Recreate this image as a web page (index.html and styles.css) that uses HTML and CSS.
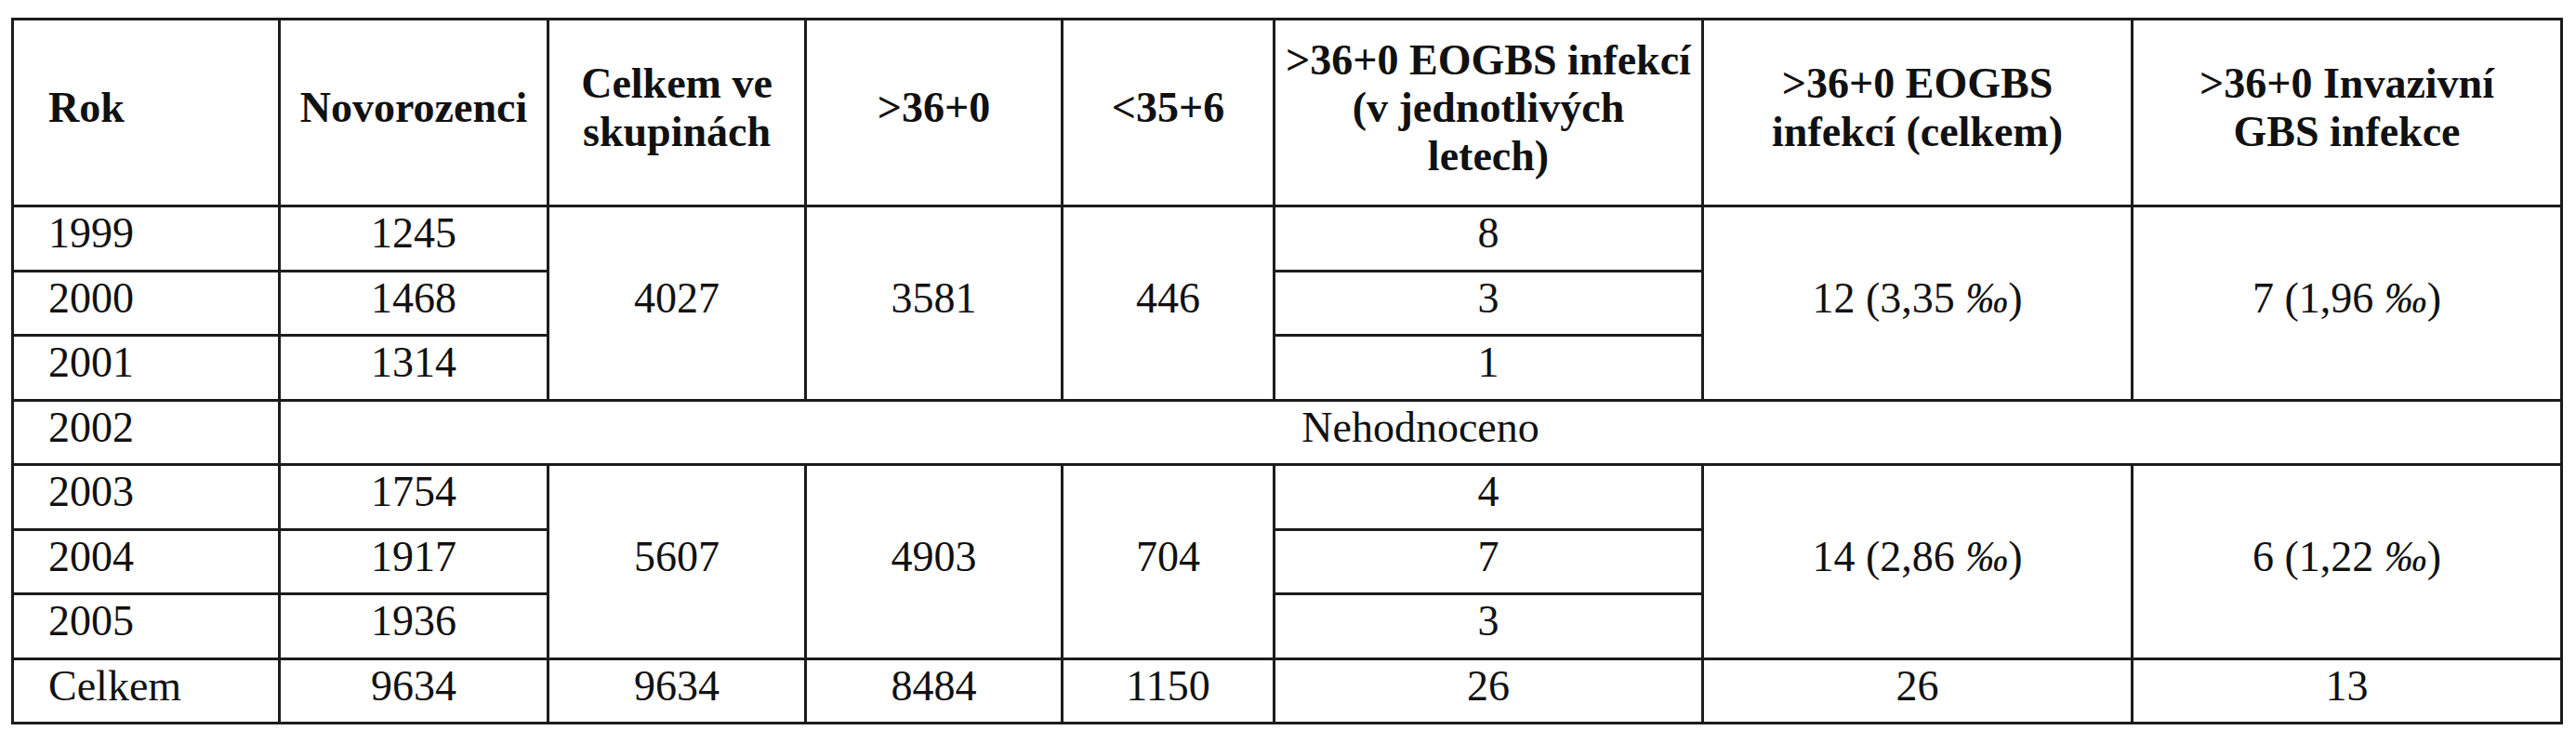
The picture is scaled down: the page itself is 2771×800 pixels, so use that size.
FILE: index.html
```html
<!DOCTYPE html>
<html lang="cs">
<head>
<meta charset="utf-8">
<title>Tabulka GBS infekcí</title>
<link rel="stylesheet" href="styles.css">
</head>
<body>
<table class="data">
  <colgroup>
    <col class="c-rok">
    <col class="c-nov">
    <col class="c-cel">
    <col class="c-g36">
    <col class="c-l35">
    <col class="c-eo1">
    <col class="c-eo2">
    <col class="c-inv">
  </colgroup>
  <thead>
    <tr class="head">
      <th class="left">Rok</th>
      <th>Novorozenci</th>
      <th>Celkem ve<br>skupinách</th>
      <th>&gt;36+0</th>
      <th>&lt;35+6</th>
      <th>&gt;36+0 EOGBS infekcí<br>(v jednotlivých<br>letech)</th>
      <th>&gt;36+0 EOGBS<br>infekcí (celkem)</th>
      <th>&gt;36+0 Invazivní<br>GBS infekce</th>
    </tr>
  </thead>
  <tbody>
    <tr>
      <td class="left">1999</td>
      <td>1245</td>
      <td rowspan="3">4027</td>
      <td rowspan="3">3581</td>
      <td rowspan="3">446</td>
      <td>8</td>
      <td rowspan="3">12 (3,35 <span class="pm">‰</span>)</td>
      <td rowspan="3">7 (1,96 <span class="pm">‰</span>)</td>
    </tr>
    <tr>
      <td class="left">2000</td>
      <td>1468</td>
      <td>3</td>
    </tr>
    <tr>
      <td class="left">2001</td>
      <td>1314</td>
      <td>1</td>
    </tr>
    <tr>
      <td class="left">2002</td>
      <td colspan="7">Nehodnoceno</td>
    </tr>
    <tr>
      <td class="left">2003</td>
      <td>1754</td>
      <td rowspan="3">5607</td>
      <td rowspan="3">4903</td>
      <td rowspan="3">704</td>
      <td>4</td>
      <td rowspan="3">14 (2,86 <span class="pm">‰</span>)</td>
      <td rowspan="3">6 (1,22 <span class="pm">‰</span>)</td>
    </tr>
    <tr>
      <td class="left">2004</td>
      <td>1917</td>
      <td>7</td>
    </tr>
    <tr>
      <td class="left">2005</td>
      <td>1936</td>
      <td>3</td>
    </tr>
    <tr>
      <td class="left">Celkem</td>
      <td>9634</td>
      <td>9634</td>
      <td>8484</td>
      <td>1150</td>
      <td>26</td>
      <td>26</td>
      <td>13</td>
    </tr>
  </tbody>
</table>
</body>
</html>
```
FILE: styles.css
```css
html, body {
  margin: 0;
  padding: 0;
  background: #ffffff;
}

body {
  padding: 19px 0 0 12px;
  font-family: "Liberation Serif", "Times New Roman", serif;
  color: #111111;
}

.data {
  border-collapse: collapse;
  table-layout: fixed;
  width: 2745px;
  font-size: 46px;
  line-height: 1.12;
}

.c-rok { width: 287px; }
.c-nov { width: 289px; }
.c-cel { width: 277px; }
.c-g36 { width: 276px; }
.c-l35 { width: 228px; }
.c-eo1 { width: 461px; }
.c-eo2 { width: 462px; }
.c-inv { width: 462px; }

.data th,
.data td {
  border: 3px solid #1c1c1c;
  padding: 0 4px 10px;
  text-align: center;
  vertical-align: middle;
  white-space: nowrap;
}

.data th {
  font-weight: bold;
}

.data tr.head {
  height: 201px;
}

.data tbody tr {
  height: 69.5px;
}

.data .left {
  text-align: left;
  padding-left: 37px;
}

.pm {
  font-style: italic;
}
```
